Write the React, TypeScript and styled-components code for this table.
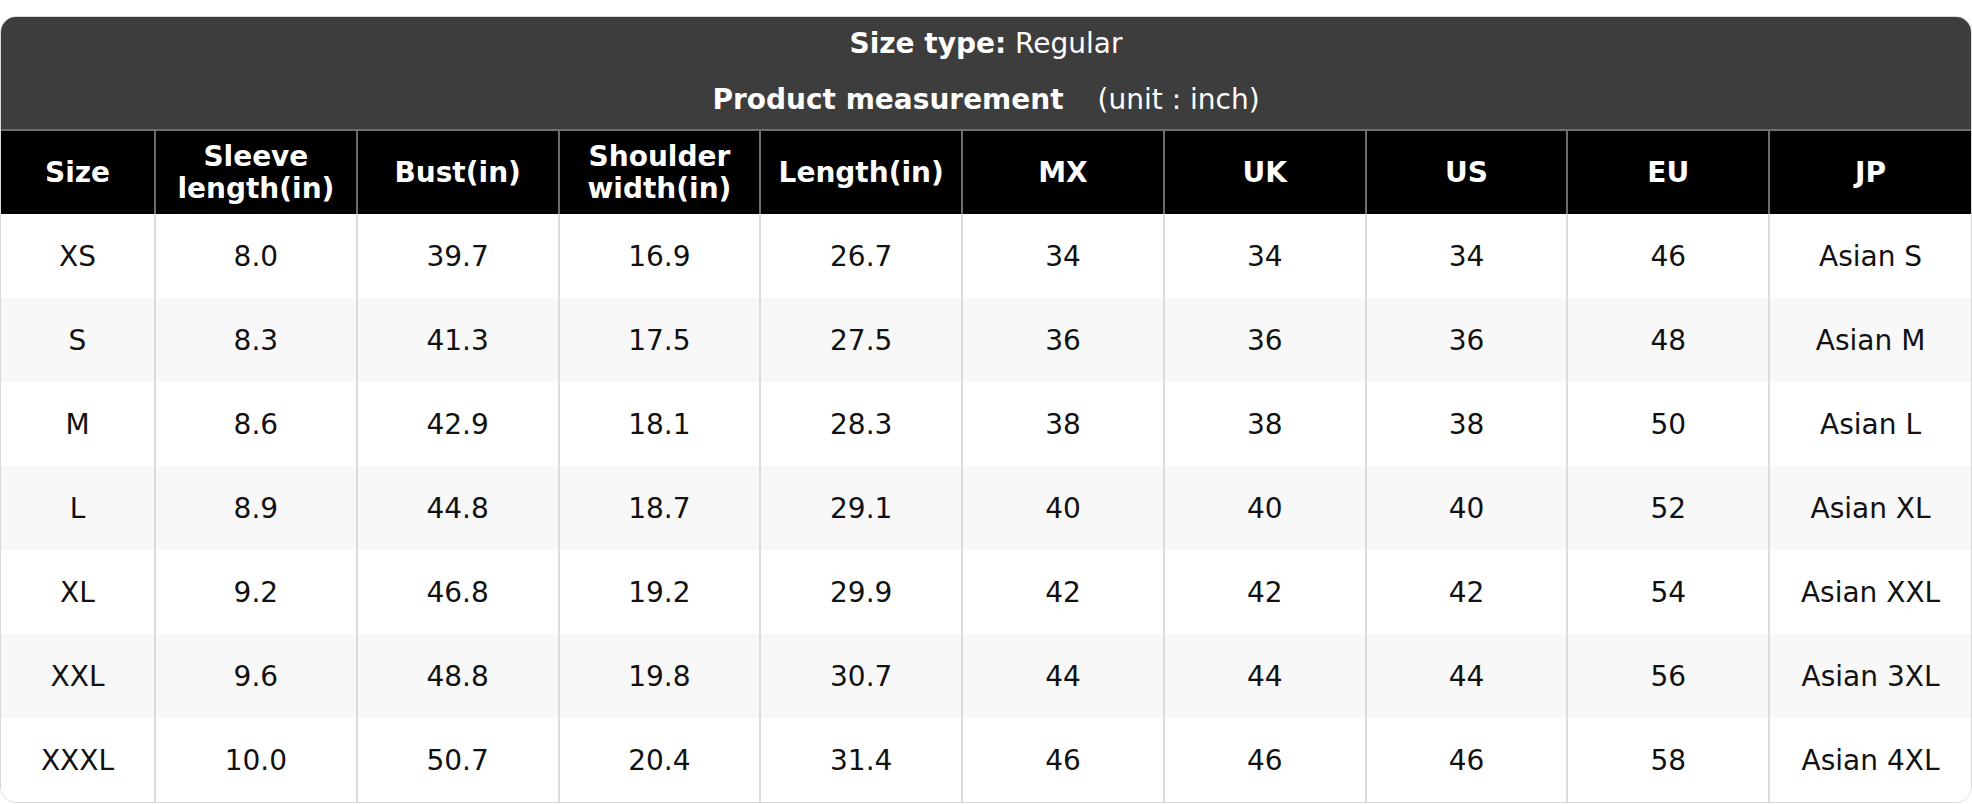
import React from 'react';
import styled, { createGlobalStyle } from 'styled-components';

const GlobalStyle = createGlobalStyle`
  body {
    margin: 0;
    background: #ffffff;
    font-family: "DejaVu Sans", "Liberation Sans", sans-serif;
  }
  * {
    box-sizing: border-box;
  }
`;

// Styled components
const Page = styled.div`
  padding-top: 16px;
`;

const Card = styled.div`
  width: 1972px;
  border: 1px solid #d9d9d9;
  border-radius: 16px;
  overflow: hidden;
  background: #ffffff;
`;

const Banner = styled.div`
  background: #3d3d3d;
  color: #ffffff;
  display: flex;
  flex-direction: column;
  align-items: center;
  gap: 24px;
  padding: 11px 0 13px;
  font-size: 28px;
  line-height: 32px;
`;

const BannerLine = styled.div`
  display: flex;
  align-items: baseline;
`;

const Strong = styled.span`
  font-weight: 700;
`;

const Unit = styled.span`
  margin-left: 34px;
`;

const Table = styled.table`
  width: 100%;
  border-collapse: collapse;
  table-layout: fixed;
`;

const HeadCell = styled.th`
  background: #000000;
  color: #ffffff;
  font-weight: 700;
  font-size: 28px;
  line-height: 32px;
  height: 84px;
  padding: 0 6px;
  text-align: center;
  border-top: 2px solid #6e6e6e;
  border-left: 2px solid #6e6e6e;
  &:first-child {
    border-left: none;
  }
`;

const Row = styled.tr<{ $alt: boolean }>`
  background: ${(p) => (p.$alt ? '#f8f8f8' : '#ffffff')};
`;

const Cell = styled.td`
  font-size: 28px;
  color: #111111;
  height: 84px;
  text-align: center;
  border-left: 2px solid #dcdcdc;
  &:first-child {
    border-left: none;
  }
`;

const headers = [
  'Size',
  'Sleeve length(in)',
  'Bust(in)',
  'Shoulder width(in)',
  'Length(in)',
  'MX',
  'UK',
  'US',
  'EU',
  'JP',
];

const rows = [
  ['XS', '8.0', '39.7', '16.9', '26.7', '34', '34', '34', '46', 'Asian S'],
  ['S', '8.3', '41.3', '17.5', '27.5', '36', '36', '36', '48', 'Asian M'],
  ['M', '8.6', '42.9', '18.1', '28.3', '38', '38', '38', '50', 'Asian L'],
  ['L', '8.9', '44.8', '18.7', '29.1', '40', '40', '40', '52', 'Asian XL'],
  ['XL', '9.2', '46.8', '19.2', '29.9', '42', '42', '42', '54', 'Asian XXL'],
  ['XXL', '9.6', '48.8', '19.8', '30.7', '44', '44', '44', '56', 'Asian 3XL'],
  ['XXXL', '10.0', '50.7', '20.4', '31.4', '46', '46', '46', '58', 'Asian 4XL'],
];

const App: React.FC = () => {
  return (
    <Page>
      <GlobalStyle />
      <Card>
        <Banner>
          <BannerLine>
            <Strong>Size type:</Strong>&nbsp;Regular
          </BannerLine>
          <BannerLine>
            <Strong>Product measurement</Strong>
            <Unit>(unit : inch)</Unit>
          </BannerLine>
        </Banner>
        <Table>
          <colgroup>
            <col style={{ width: 154 }} />
            {headers.slice(1).map((h) => (
              <col key={h} />
            ))}
          </colgroup>
          <thead>
            <tr>
              {headers.map((h) => (
                <HeadCell key={h}>{h}</HeadCell>
              ))}
            </tr>
          </thead>
          <tbody>
            {rows.map((r, i) => (
              <Row key={r[0]} $alt={i % 2 === 1}>
                {r.map((v, j) => (
                  <Cell key={j}>{v}</Cell>
                ))}
              </Row>
            ))}
          </tbody>
        </Table>
      </Card>
    </Page>
  );
};

export default App;
